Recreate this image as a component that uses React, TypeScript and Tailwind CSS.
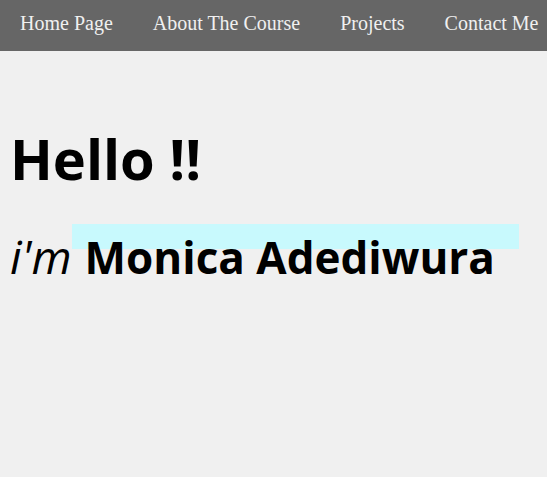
const links = ["Home Page", "About The Course", "Projects", "Contact Me"];

export default function App() {
  return (
    <div className="min-h-screen overflow-hidden bg-[#f0f0f0] text-black">
      <nav className="bg-[#666666] font-['Liberation_Serif',serif] text-[20px] leading-[23px] text-[#f0f0f0]">
        <ul className="flex gap-10 px-5 pt-3 pb-4">
          {links.map((label) => (
            <li key={label} className="shrink-0">
              <a href="#" className="whitespace-nowrap">{label}</a>
            </li>
          ))}
        </ul>
      </nav>
      <main className="px-[10px] pt-[69px] font-['Open_Sans','Noto_Sans',sans-serif]">
        <h1 className="text-[56px] leading-[76px] font-bold">Hello !!</h1>
        <p className="mt-7 flex whitespace-nowrap">
          <i className="text-[46px] leading-[64px]">i'm</i>
          <b className="bg-linear-to-b from-[#c8f9fd] from-[25px] to-transparent to-[25px] pr-6 pl-[13px] text-[44px] leading-[66px]">Monica Adediwura</b>
        </p>
      </main>
    </div>
  );
}
